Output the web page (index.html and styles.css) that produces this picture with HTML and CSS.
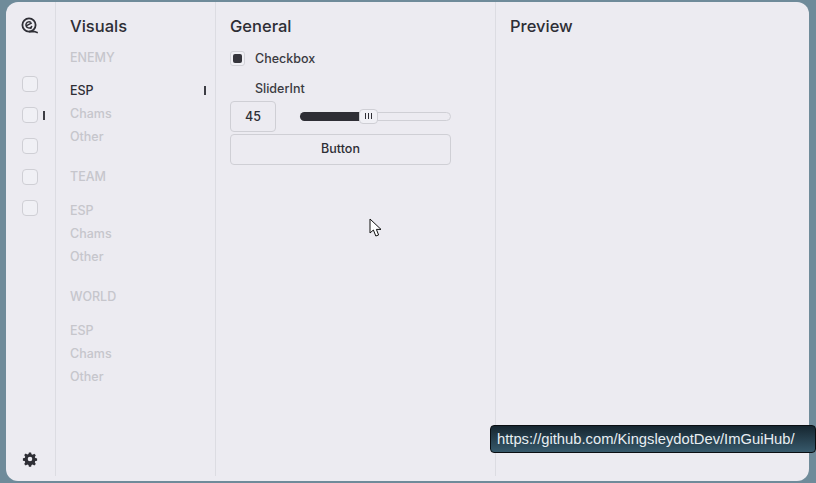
FILE: index.html
```html
<!DOCTYPE html>
<html lang="en">
<head>
<meta charset="utf-8">
<title>ImGui Hub</title>
<link rel="stylesheet" href="styles.css">
</head>
<body>
<div class="window">
  <aside class="rail">
    <svg class="logo" width="18" height="18" viewBox="0 0 18 18" fill="none" stroke="#2e2e35">
      <circle cx="8" cy="9" r="6.6" stroke-width="1.8"/>
      <path d="M5.2 9.8 L10.8 6.8 M10.9 10 A3.1 3.1 0 1 1 9.8 6.4 M10.9 10 L9.6 13" stroke-width="1.4"/>
      <path d="M8 15.6 H13.5 L16.8 16.8" stroke-width="1.6"/>
    </svg>
    <div class="rail-items">
      <div class="rail-item"><span class="box"></span></div>
      <div class="rail-item"><span class="box"></span><span class="tick rail-tick"></span></div>
      <div class="rail-item"><span class="box"></span></div>
      <div class="rail-item"><span class="box"></span></div>
      <div class="rail-item"><span class="box"></span></div>
    </div>
    <svg class="gear" width="16" height="16" viewBox="0 0 16 16">
      <path fill="#2e2e35" fill-rule="evenodd" d="M6.9 1.5h2.2l.4 1.8 1.2.5 1.6-1 1.5 1.5-1 1.6.5 1.2 1.8.4v2.2l-1.8.4-.5 1.2 1 1.6-1.5 1.5-1.6-1-1.2.5-.4 1.8H6.9l-.4-1.8-1.2-.5-1.6 1-1.5-1.5 1-1.6-.5-1.2-1.8-.4V7.3l1.8-.4.5-1.2-1-1.6 1.5-1.5 1.6 1 1.2-.5zM8 5.7a2.3 2.3 0 1 0 0 4.6 2.3 2.3 0 0 0 0-4.6z"/>
    </svg>
  </aside>
  <nav class="nav">
    <h2 class="title">Visuals</h2>
    <div class="group">
      <div class="group-label">ENEMY</div>
      <div class="nav-item active">ESP<span class="tick"></span></div>
      <div class="nav-item">Chams</div>
      <div class="nav-item">Other</div>
    </div>
    <div class="group">
      <div class="group-label">TEAM</div>
      <div class="nav-item">ESP</div>
      <div class="nav-item">Chams</div>
      <div class="nav-item">Other</div>
    </div>
    <div class="group">
      <div class="group-label">WORLD</div>
      <div class="nav-item">ESP</div>
      <div class="nav-item">Chams</div>
      <div class="nav-item">Other</div>
    </div>
  </nav>
  <main class="general">
    <h2 class="title">General</h2>
    <div class="check-row"><span class="check"><span class="check-mark"></span></span><span class="label">Checkbox</span></div>
    <div class="slider-label label">SliderInt</div>
    <div class="slider-row">
      <div class="value">45</div>
      <div class="track">
        <div class="fill"></div>
        <div class="thumb"><i></i><i></i><i></i></div>
      </div>
    </div>
    <div class="button">Button</div>
  </main>
  <section class="preview">
    <h2 class="title">Preview</h2>
  </section>
</div>
<svg class="cursor" width="14" height="20" viewBox="0 0 14 20">
  <path d="M1 1V15L4.4 12 6.8 18 9.6 17 7.4 11.4H12Z" fill="#fff" stroke="#111" stroke-width="1"/>
</svg>
<div class="tooltip">https://github.com/KingsleydotDev/ImGuiHub/</div>
</body>
</html>
```
FILE: styles.css
```css
* { box-sizing: border-box; margin: 0; padding: 0; }
html, body { width: 816px; height: 483px; overflow: hidden; }
body {
  background: #6f8b9a;
  font-family: Inter, Lato, sans-serif;
  color: #2e2e35;
  padding: 2px 7px 2px 6px;
}
.window {
  width: 803px;
  height: 479px;
  background: #ecebf1;
  border-radius: 12px;
  display: flex;
  padding-bottom: 5px;
}
.rail {
  width: 50px;
  border-right: 1px solid #dcdce2;
  display: flex;
  flex-direction: column;
  padding: 14px 0 9px 15px;
}
.logo { display: block; margin-bottom: 42px; }
.rail-items { display: flex; flex-direction: column; gap: 15px; flex: 1; margin-left: 1px; }
.rail-item { display: flex; align-items: center; height: 16px; position: relative; }
.box {
  width: 16px; height: 16px;
  border: 1px solid #cfcfd5;
  border-radius: 4px;
  background: #f0f0f5;
}
.tick { display: block; width: 2px; height: 9px; background: #3d3d44; margin-right: 1px; }
.rail-tick { margin-left: 5px; }
.gear { display: block; margin-left: 1px; }
.nav {
  width: 160px;
  border-right: 1px solid #dcdce2;
  padding: 14px 8px 0 14px;
}
.title { font-size: 16.5px; font-weight: 500; line-height: 20px; }
.group { margin-bottom: 19px; }
.group-label { font-size: 12.5px; font-weight: 500; color: #c6c6cc; line-height: 20px; margin-top: 12px; margin-bottom: 11px; }
.nav > .group ~ .group .group-label { margin-top: 0; margin-bottom: 12px; }
.nav-item {
  font-size: 12.5px; font-weight: 500; color: #c6c6cc; line-height: 23px;
  display: flex; align-items: center; justify-content: space-between;
}
.nav-item.active { color: #2e2e35; }
.general {
  width: 280px;
  border-right: 1px solid #dcdce2;
  padding: 14px 0 0 14px;
}
.check-row { display: flex; align-items: center; margin-top: 14px; height: 16px; }
.check {
  width: 15px; height: 15px;
  border: 1px solid #d2d2d8;
  border-radius: 3px;
  display: flex; align-items: center; justify-content: center;
  background: #f0f0f5;
}
.check-mark { width: 9px; height: 9px; border-radius: 2px; background: #35353c; }
.label { font-size: 12.5px; font-weight: 500; color: #3a3a41; margin-left: 10px; }
.slider-label { margin: 15px 0 0 25px; line-height: 16px; }
.slider-row { display: flex; align-items: center; margin-top: 4px; width: 221px; }
.value {
  width: 46px; height: 31px;
  border: 1px solid #cfcfd5;
  border-radius: 4px;
  font-size: 12.5px; font-weight: 500;
  display: flex; align-items: center; justify-content: center;
  padding-bottom: 1px;
}
.track {
  margin-left: 24px;
  width: 151px; height: 9px;
  border: 1px solid #cfcfd5;
  border-radius: 5px;
  position: relative;
  background: #ecebf1;
  margin-top: -1px;
}
.fill { position: absolute; left: -1px; top: -1px; width: 61px; height: 9px; background: #2e2e35; border-radius: 5px 0 0 5px; }
.thumb {
  position: absolute; left: 58px; top: -4px;
  width: 19px; height: 15px;
  border: 1px solid #cfcfd5;
  border-radius: 4px;
  background: #f0f0f5;
  display: flex; align-items: center; justify-content: center; gap: 2px;
}
.thumb i { display: block; width: 1px; height: 6px; background: #2e2e35; }
.button {
  margin-top: 2px;
  width: 221px; height: 31px;
  border: 1px solid #cfcfd5;
  border-radius: 4px;
  font-size: 12.5px; font-weight: 500;
  display: flex; align-items: center; justify-content: center;
  padding-bottom: 2px;
}
.preview { flex: 1; padding: 14px 0 0 14px; }
.cursor { position: absolute; left: 369px; top: 218px; }
.tooltip {
  position: absolute; left: 490px; top: 425px;
  width: 326px; height: 28px;
  border: 1px solid #0a0e12;
  border-radius: 4px;
  background: linear-gradient(#162630, #37596b);
  color: #e8eef2;
  font-family: "Liberation Sans", sans-serif;
  font-size: 14.75px;
  line-height: 26px;
  padding-left: 6px;
}
```
